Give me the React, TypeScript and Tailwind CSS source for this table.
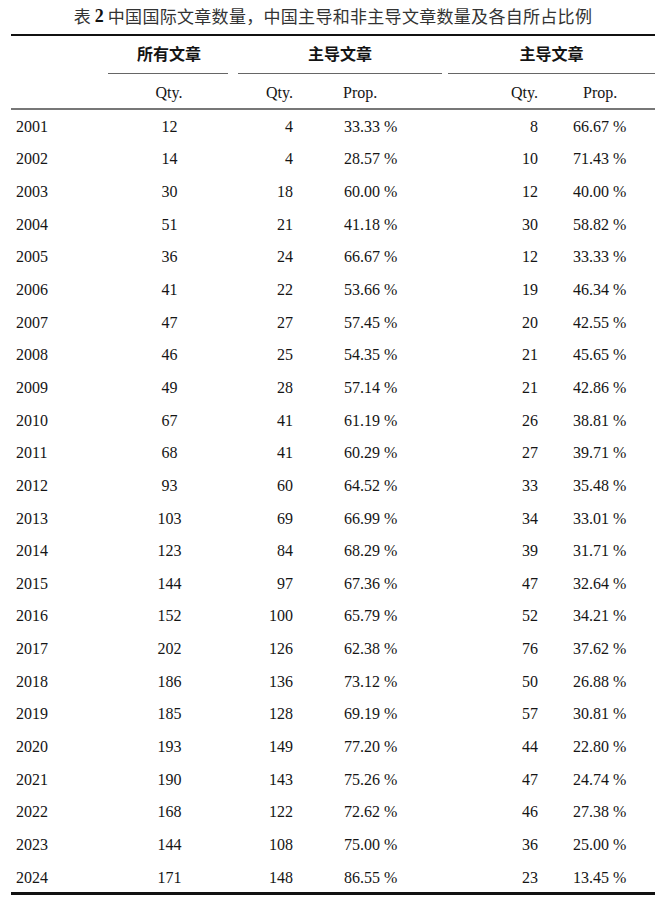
import React from "react";

// ============================================================================
// DATA
// ============================================================================
type Row = [string, number, number, string, number, string];

const rows: Row[] = [
  ["2001", 12, 4, "33.33", 8, "66.67"],
  ["2002", 14, 4, "28.57", 10, "71.43"],
  ["2003", 30, 18, "60.00", 12, "40.00"],
  ["2004", 51, 21, "41.18", 30, "58.82"],
  ["2005", 36, 24, "66.67", 12, "33.33"],
  ["2006", 41, 22, "53.66", 19, "46.34"],
  ["2007", 47, 27, "57.45", 20, "42.55"],
  ["2008", 46, 25, "54.35", 21, "45.65"],
  ["2009", 49, 28, "57.14", 21, "42.86"],
  ["2010", 67, 41, "61.19", 26, "38.81"],
  ["2011", 68, 41, "60.29", 27, "39.71"],
  ["2012", 93, 60, "64.52", 33, "35.48"],
  ["2013", 103, 69, "66.99", 34, "33.01"],
  ["2014", 123, 84, "68.29", 39, "31.71"],
  ["2015", 144, 97, "67.36", 47, "32.64"],
  ["2016", 152, 100, "65.79", 52, "34.21"],
  ["2017", 202, 126, "62.38", 76, "37.62"],
  ["2018", 186, 136, "73.12", 50, "26.88"],
  ["2019", 185, 128, "69.19", 57, "30.81"],
  ["2020", 193, 149, "77.20", 44, "22.80"],
  ["2021", 190, 143, "75.26", 47, "24.74"],
  ["2022", 168, 122, "72.62", 46, "27.38"],
  ["2023", 144, 108, "75.00", 36, "25.00"],
  ["2024", 171, 148, "86.55", 23, "13.45"],
];

// year | all qty | gap | lead qty | lead prop | gap | non-lead qty | non-lead prop
const grid =
  "grid grid-cols-[97px_120px_10px_55px_149px_6px_90px_117px]";

export default function App() {
  return (
    <div className="font-serif">
      <div className="min-h-[902px] bg-white pl-[11px] pr-[5px] font-['Liberation_Serif','Noto_Sans_CJK_SC'] text-[#151515]">
        {/* Title */}
        <div className="flex h-[34px] w-[644px] items-center justify-center pb-[2px] text-[17px] text-[#333]">
          <span className="font-['Noto_Sans_CJK_SC']">表</span>
          <span className="mx-[4px] text-[18px] font-bold text-[#111]">2</span>
          <span className="font-['Noto_Sans_CJK_SC'] tracking-[0.3px]">
            中国国际文章数量，中国主导和非主导文章数量及各自所占比例
          </span>
        </div>

        <div className="w-[644px]">
          {/* top rule */}
          <div className="h-[2px] bg-[#111]" />

          {/* group header */}
          <div className={`${grid} h-[38px]`}>
            <div />
            <div className="flex items-center justify-center border-b border-[#666] pb-[4px] pl-[2px] font-['Noto_Sans_CJK_SC'] text-[16px] font-bold text-[#141414]">
              所有文章
            </div>
            <div />
            <div className="col-span-2 flex items-center justify-center border-b border-[#666] pb-[4px] font-['Noto_Sans_CJK_SC'] text-[16px] font-bold text-[#141414]">
              主导文章
            </div>
            <div />
            <div className="col-span-2 flex items-center justify-center border-b border-[#666] pb-[4px] font-['Noto_Sans_CJK_SC'] text-[16px] font-bold text-[#141414]">
              主导文章
            </div>
          </div>

          {/* sub header */}
          <div className={`${grid} h-[34px] items-center pt-[4px] text-[16px]`}>
            <div />
            <div className="pl-[2px] text-center">Qty.</div>
            <div />
            <div className="text-right">Qty.</div>
            <div className="pl-[50px]">Prop.</div>
            <div />
            <div className="text-right">Qty.</div>
            <div className="pl-[45px]">Prop.</div>
          </div>

          <div className="h-[1.5px] bg-[#777]" />

          {/* body */}
          <div className="pt-[1px]">
            {rows.map((r) => (
              <div key={r[0]} className={`${grid} h-[32.65px] items-center text-[16px]`}>
                <div className="pl-[5px]">{r[0]}</div>
                <div className="pl-[3px] text-center">{r[1]}</div>
                <div />
                <div className="text-right">{r[2]}</div>
                <div className="pl-[51px]">{r[3]} %</div>
                <div />
                <div className="text-right">{r[4]}</div>
                <div className="pl-[35px]">{r[5]} %</div>
              </div>
            ))}
          </div>

          {/* bottom rule */}
          <div className="-mt-[2px] h-[3px] bg-[#111]" />
        </div>
      </div>
    </div>
  );
}
